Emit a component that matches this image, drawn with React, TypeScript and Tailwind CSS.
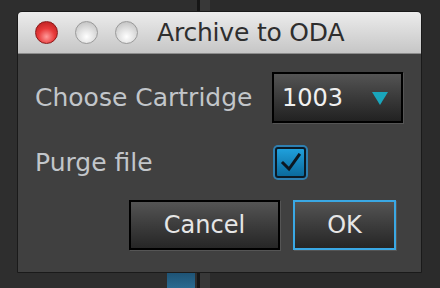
import React from "react";

const font = { fontFamily: '"DejaVu Sans", "Liberation Sans", sans-serif' };

function Light({ red }: { red?: boolean }) {
  return (
    <span
      className={`block w-[23px] h-[23px] rounded-full border ${
        red
          ? "border-[#8a1a1a] bg-[radial-gradient(circle_at_50%_70%,#ff9a9a_0%,#e83a3a_45%,#b01818_100%)]"
          : "border-[#9a9a9a] bg-[radial-gradient(circle_at_50%_70%,#ffffff_0%,#e0e0e0_45%,#b8b8b8_100%)]"
      }`}
    />
  );
}

function DarkButton({ children, focused }: { children: React.ReactNode; focused?: boolean }) {
  return (
    <div className="shadow-[1px_1px_0_#555]">
      <div
        className={`h-[50px] flex items-center justify-center border-2 ${
          focused ? "border-[#3aa8e4]" : "border-black"
        } bg-gradient-to-b from-[#545454] to-[#262626] text-[24px] text-[#e6e6e6]`}
      >
        {children}
      </div>
    </div>
  );
}

export default function App() {
  return (
    <div className="relative w-[440px] h-[288px] overflow-hidden bg-[#2c2c2c]" style={font}>
      {/* window content behind the sheet */}
      <div className="flex h-full">
        <div className="w-[197px] bg-[#2e2e2e] flex flex-col justify-end">
          <div className="ml-[167px] w-[28px] h-[18px] bg-gradient-to-b from-[#1c4f70] to-[#2a6a90]" />
        </div>
        <div className="w-[3px] bg-[#161616]" />
        <div className="w-[10px] bg-[#383838]" />
        <div className="flex-1 bg-[#2b2b2b]" />
      </div>

      {/* dialog */}
      <div className="absolute left-[17px] top-[11px] w-[405px] h-[262px] border border-[#1a1a1a] rounded-t-[5px] bg-[#404040] flex flex-col">
        <div className="h-[42px] rounded-t-[4px] bg-gradient-to-b from-[#ececec] to-[#c6c6c6] border-b border-[#8c8c8c] flex items-center pl-[17px]">
          <div className="flex gap-[17px]">
            <Light red />
            <Light />
            <Light />
          </div>
          <span className="ml-[19px] text-[25px] leading-none text-[#2e2e2e] tracking-[-0.2px]">Archive to ODA</span>
        </div>

        <div className="flex-1 pl-[17px] pr-[18px] pt-[18px]">
          <div className="flex items-center">
            <span className="w-[237px] text-[25px] leading-none text-[#c2c6ca]">Choose Cartridge</span>
            <div className="shadow-[1px_1px_0_#555]">
              <div className="w-[131px] h-[51px] border-2 border-black bg-gradient-to-b from-[#545454] to-[#222] flex items-center justify-between pl-[8px] pr-[12px]">
                <span className="text-[24px] leading-none text-[#f0f0f0]">1003</span>
                <svg width="18" height="16" viewBox="0 0 18 16">
                  <path d="M1 2 L17 2 L9 15 Z" fill="#1aa6bc" />
                </svg>
              </div>
            </div>
          </div>

          <div className="flex items-center mt-[22px]">
            <span className="w-[238px] text-[25px] leading-none text-[#c2c6ca]">Purge file</span>
            <div className="w-[35px] h-[35px] rounded-[5px] bg-[#2f7fb0] p-[2px]">
              <div className="w-full h-full rounded-[3px] border-2 border-[#0c1a24] bg-gradient-to-b from-[#1fa0dc] to-[#0b6a9c] flex items-center justify-center">
                <svg width="22" height="20" viewBox="0 0 22 20">
                  <path d="M3 10 L9 16 L19 2" fill="none" stroke="#0c1822" strokeWidth="3" strokeLinecap="square" />
                </svg>
              </div>
            </div>
          </div>

          <div className="flex justify-end gap-[13px] mt-[20px] pr-[7px]">
            <div className="w-[151px]">
              <DarkButton>Cancel</DarkButton>
            </div>
            <div className="w-[103px]">
              <DarkButton focused>OK</DarkButton>
            </div>
          </div>
        </div>
      </div>
    </div>
  );
}
